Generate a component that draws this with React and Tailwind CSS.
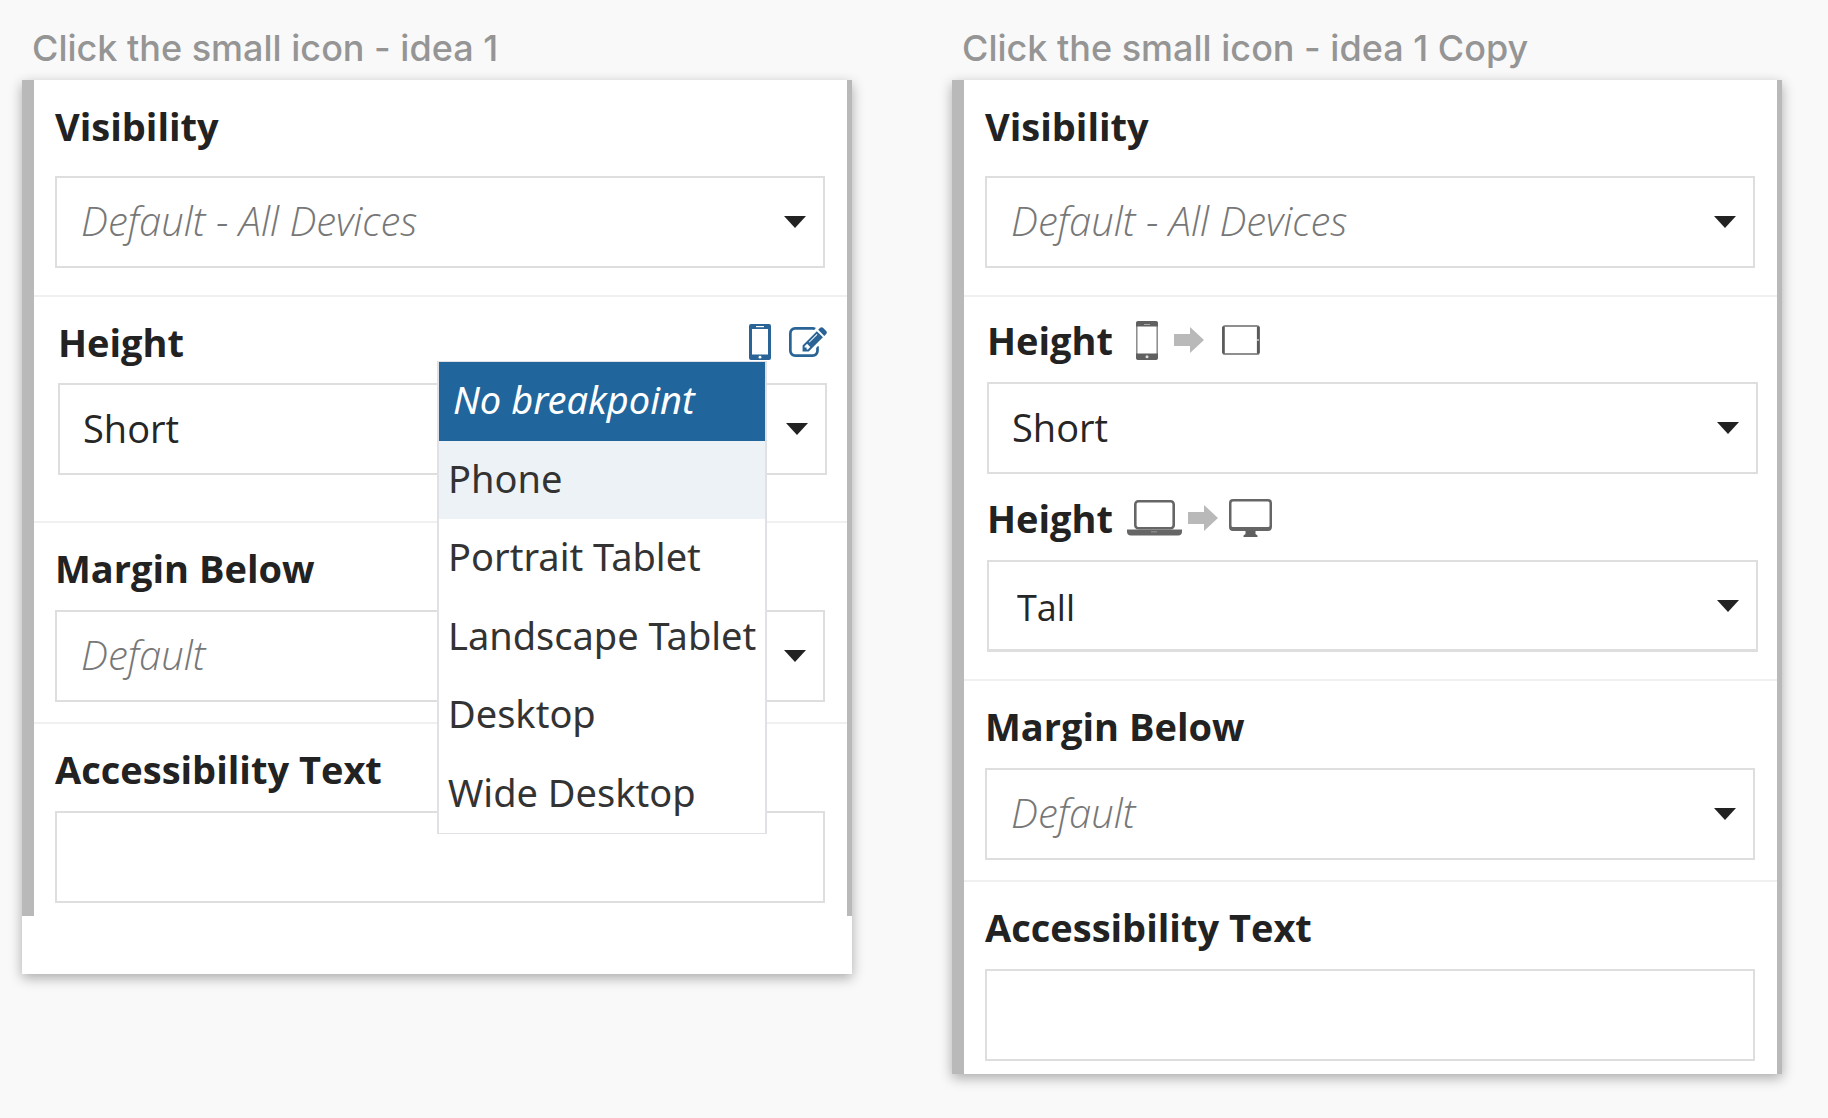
import { useId } from "react";

const label = "font-['Open_Sans',sans-serif] text-[38px] leading-[52px] font-bold text-[#222]";

function EditIcon() {
  return (
    <svg viewBox="0 128 1792 1408" className="h-[30px] w-[38px]" fill="currentColor" aria-hidden="true">
      <path d="M888 1184l116-116-152-152-116 116v56h96v96h56zm440-720q-16-16-33 1l-350 350q-17 17-1 33t33-1l350-350q17-17 1-33zm80 594v190q0 119-84.5 203.5t-203.5 84.5h-832q-119 0-203.5-84.5t-84.5-203.5v-832q0-119 84.5-203.5t203.5-84.5h832q63 0 117 25 15 7 18 23 3 17-9 29l-49 49q-14 14-32 8-23-6-45-6h-832q-66 0-113 47t-47 113v832q0 66 47 113t113 47h832q66 0 113-47t47-113v-126q0-13 9-22l64-64q15-15 35-7t20 29zm-96-738l288 288-672 672h-288v-288zm444 132l-92 92-288-288 92-92q28-28 68-28t68 28l152 152q28 28 28 68t-28 68z" />
    </svg>
  );
}

function BluePhone() {
  return (
    <svg viewBox="0 0 22 36" className="h-9 w-[22px]" aria-hidden="true">
      <path fill="currentColor" fillRule="evenodd" d="M2 0h18a2 2 0 0 1 2 2v32a2 2 0 0 1-2 2H2a2 2 0 0 1-2-2V2a2 2 0 0 1 2-2zM3 5v25.500h16V5z" />
      <rect x="7" y="2" width="8" height="1.200" fill="#fff" />
      <circle cx="11" cy="33.200" r="1.400" fill="#fff" />
    </svg>
  );
}

function PhoneIcon() {
  return (
    <svg viewBox="0 0 22 39" className="h-[39px] w-[22px]" aria-hidden="true">
      <rect x="0.800" y="1" width="20.400" height="37" rx="2" fill="#fff" stroke="#8a8a8a" strokeWidth="1.500" />
      <path fill="#606060" d="M2 0h18a2 2 0 0 1 2 2v3.500H0V2a2 2 0 0 1 2-2zM0 32.500h22V37a2 2 0 0 1-2 2H2a2 2 0 0 1-2-2z" />
      <rect x="8" y="3" width="6" height="1" fill="#aaa" />
      <circle cx="11" cy="35.700" r="1.500" fill="#ddd" />
    </svg>
  );
}

function TabletIcon() {
  return (
    <svg viewBox="0 0 38 30" className="h-[30px] w-[38px]" aria-hidden="true">
      <rect x="1" y="1" width="36" height="28" rx="2" fill="#fff" stroke="#6b6b6b" strokeWidth="1.700" />
      <path d="M1.500 2v26M36.200 2v26" stroke="#5a5a5a" strokeWidth="2.600" />
      <circle cx="36" cy="15" r="0.900" fill="#ddd" />
    </svg>
  );
}

function LaptopIcon() {
  return (
    <svg viewBox="0 0 55 36" className="h-9 w-[55px]" aria-hidden="true">
      <rect x="8.300" y="1.300" width="38.400" height="27" rx="3" fill="#fff" stroke="#666" strokeWidth="2.600" />
      <path d="M0 29.500h55v2a4 4 0 0 1-4 4H4a4 4 0 0 1-4-4z" fill="#666" />
      <rect x="24" y="31" width="6" height="1.500" fill="#888" />
    </svg>
  );
}

function MonitorIcon() {
  return (
    <svg viewBox="0 0 43 38" className="h-[38px] w-[43px]" aria-hidden="true">
      <path fill="#666" fillRule="evenodd" d="M4 0h35a4 4 0 0 1 4 4v24a4 4 0 0 1-4 4H4a4 4 0 0 1-4-4V4a4 4 0 0 1 4-4zM4 2.500a1.500 1.500 0 0 0-1.500 1.500v22.500q0 1.500 1.500 1.500h35q1.500 0 1.500-1.500V4a1.500 1.500 0 0 0-1.500-1.500z" />
      <path fill="#606060" d="M16.500 31.500h10v3.500l2 1.500V38H14.500v-1.500l2-1.500z" />
    </svg>
  );
}

function Arrow() {
  return (
    <svg viewBox="0 0 30 26" className="h-[26px] w-[30px]" aria-hidden="true">
      <path fill="#b9b9b9" d="M0 7h16V0l14 13-14 13v-7H0z" />
    </svg>
  );
}

function SelectBox({ id, value, className = "border-2 pb-[2px] pl-[23px] text-[38px] text-[#262626]" }) {
  return (
    <div className="relative">
      <select
        id={id}
        defaultValue={value}
        className={`block h-[92px] w-full appearance-none rounded-none border-[#dedede] bg-white pr-16 font-['Open_Sans',sans-serif] outline-none ${className}`}
      >
        <option>{value}</option>
      </select>
      <svg viewBox="0 0 22 12" className="pointer-events-none absolute top-10 right-[19px] h-3 w-[22px]" aria-hidden="true">
        <path d="M0 0h22L11 12z" fill="#222" />
      </svg>
    </div>
  );
}

const placeholder = "border-2 pb-[2px] pl-6 text-[40px] font-light text-[#777] italic";

function Visibility() {
  const id = useId();
  return (
    <section className="border-b-2 border-[#f0f0f0] pt-5 pr-[22px] pb-[27px] pl-[21px]">
      <label htmlFor={id} className={`mb-6 block ${label}`}>Visibility</label>
      <SelectBox id={id} value="Default - All Devices" className={placeholder} />
    </section>
  );
}

function MarginBelow() {
  const id = useId();
  return (
    <section className="border-b-2 border-[#f0f0f0] pt-[19px] pr-[22px] pb-5 pl-[21px]">
      <label htmlFor={id} className={`mb-4 block ${label}`}>Margin Below</label>
      <SelectBox id={id} value="Default" className={placeholder} />
    </section>
  );
}

function AccessibilityText() {
  const id = useId();
  return (
    <section className="pt-[19px] pr-[22px] pb-[13px] pl-[21px]">
      <label htmlFor={id} className={`mb-4 block ${label}`}>Accessibility Text</label>
      <input
        id={id}
        type="text"
        className="block h-[92px] w-full border-2 border-[#dedede] bg-white px-6 font-['Open_Sans',sans-serif] text-[38px] text-[#262626] outline-none"
      />
    </section>
  );
}

const breakpoints = ["Phone", "Portrait Tablet", "Landscape Tablet", "Desktop", "Wide Desktop"];

function BreakpointMenu() {
  return (
    <div
      role="menu"
      className="absolute top-[45px] right-[60px] z-10 grid h-[473px] w-[330px] grid-rows-6 border-x-2 border-t border-b border-[#dfe1e4] bg-white font-['Noto_Sans',sans-serif] text-[38px] text-[#333]"
    >
      <button role="menuitem" className="bg-[#20659b] px-[14px] pb-[3px] text-left text-white italic">
        No breakpoint
      </button>
      {breakpoints.map((name) => (
        <button key={name} role="menuitem" className="pb-[3px] pl-[9px] text-left whitespace-nowrap nth-2:bg-[#edf2f7]">
          {name}
        </button>
      ))}
    </div>
  );
}

function HeightWithMenu() {
  const id = useId();
  return (
    <section className="border-b-2 border-[#f0f0f0] pt-[19px] pr-5 pb-[46px] pl-6">
      <div className="relative mb-[15px] flex justify-between">
        <label htmlFor={id} className={label}>Height</label>
        <div className="flex items-center gap-[18px] text-[#2a6496]">
          <button aria-label="Choose breakpoint"><BluePhone /></button>
          <button aria-label="Edit"><EditIcon /></button>
        </div>
        <BreakpointMenu />
      </div>
      <SelectBox id={id} value="Short" />
    </section>
  );
}

function HeightRanges() {
  const small = useId();
  const large = useId();
  return (
    <section className="border-b-2 border-[#f0f0f0] pt-[17px] pr-[19px] pb-[27px] pl-[23px]">
      <div className="mb-4 flex items-center">
        <label htmlFor={small} className={label}>Height</label>
        <div className="flex items-center pl-[23px]">
          <PhoneIcon />
          <span className="pr-[18px] pl-4"><Arrow /></span>
          <TabletIcon />
        </div>
      </div>
      <SelectBox id={small} value="Short" />
      <div className="mt-[18px] mb-4 flex items-center">
        <label htmlFor={large} className={label}>Height</label>
        <div className="flex items-center pl-[14px]">
          <LaptopIcon />
          <span className="pr-[11px] pl-[6px]"><Arrow /></span>
          <MonitorIcon />
        </div>
      </div>
      <SelectBox
        id={large}
        value="Tall"
        className="border-2 border-b-3 pt-1 pl-7 text-[36px] text-[#262626]"
      />
    </section>
  );
}

function Artboard({ title, tail = "", children }) {
  return (
    <article className="min-w-0">
      <h2 className="flex h-20 items-end pb-3 pl-[10px] font-['Inter',sans-serif] text-[36px] leading-[40px] font-medium whitespace-nowrap text-[#959595]">
        {title}
      </h2>
      <div className={`bg-white shadow-[0_4px_12px_rgba(0,0,0,0.32)] ${tail}`}>
        <div className="border-r-[5px] border-l-[12px] border-[#b9b9b9]">{children}</div>
      </div>
    </article>
  );
}

export default function App() {
  return (
    <main className="min-h-screen bg-[#f9f9f9]">
      <div className="grid grid-cols-2 items-start gap-[100px] pr-[46px] pl-[22px]">
        <Artboard title="Click the small icon - idea 1" tail="pb-[58px]">
          <Visibility />
          <HeightWithMenu />
          <MarginBelow />
          <AccessibilityText />
        </Artboard>
        <Artboard title="Click the small icon - idea 1 Copy">
          <Visibility />
          <HeightRanges />
          <MarginBelow />
          <AccessibilityText />
        </Artboard>
      </div>
    </main>
  );
}
